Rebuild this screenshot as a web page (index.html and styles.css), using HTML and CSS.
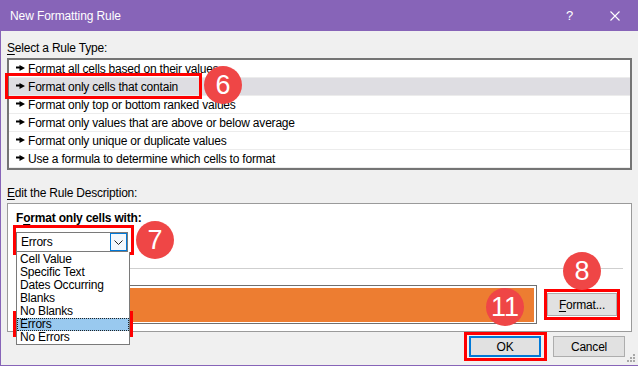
FILE: index.html
```html
<!DOCTYPE html>
<html lang="en">
<head>
  <meta charset="UTF-8">
  <meta name="viewport" content="width=device-width, initial-scale=1.0">
  <title>New Formatting Rule</title>
  <link rel="stylesheet" href="styles.css">
</head>
<body>
  <div class="dialog">
    <header class="titlebar">
      <span class="title">New Formatting Rule</span>
      <span class="help">?</span>
      <svg class="close" viewBox="0 0 10 10" width="10" height="10">
        <path d="M0.5 0.5 L9.5 9.5 M9.5 0.5 L0.5 9.5" stroke="#fff" stroke-width="1.1" fill="none"/>
      </svg>
    </header>

    <main class="content">
      <p class="label"><u>S</u>elect a Rule Type:</p>
      <ul class="rule-list">
        <li class="rule"><svg class="arrow" viewBox="0 0 9 6" width="9" height="6"><path d="M0 1.5h4v2H0z M3.5 0 L9 3 L3.5 6z"/></svg>Format all cells based on their values</li>
        <li class="rule rule--selected"><svg class="arrow" viewBox="0 0 9 6" width="9" height="6"><path d="M0 1.5h4v2H0z M3.5 0 L9 3 L3.5 6z"/></svg>Format only cells that contain</li>
        <li class="rule"><svg class="arrow" viewBox="0 0 9 6" width="9" height="6"><path d="M0 1.5h4v2H0z M3.5 0 L9 3 L3.5 6z"/></svg>Format only top or bottom ranked values</li>
        <li class="rule"><svg class="arrow" viewBox="0 0 9 6" width="9" height="6"><path d="M0 1.5h4v2H0z M3.5 0 L9 3 L3.5 6z"/></svg>Format only values that are above or below average</li>
        <li class="rule"><svg class="arrow" viewBox="0 0 9 6" width="9" height="6"><path d="M0 1.5h4v2H0z M3.5 0 L9 3 L3.5 6z"/></svg>Format only unique or duplicate values</li>
        <li class="rule"><svg class="arrow" viewBox="0 0 9 6" width="9" height="6"><path d="M0 1.5h4v2H0z M3.5 0 L9 3 L3.5 6z"/></svg>Use a formula to determine which cells to format</li>
      </ul>

      <p class="label label--desc"><u>E</u>dit the Rule Description:</p>
      <section class="desc">
        <p class="desc-title">F<u>o</u>rmat only cells with:</p>
        <div class="combo">
          <span class="combo-value">Errors</span>
          <span class="combo-btn">
            <svg viewBox="0 0 9 5" width="9" height="5"><path d="M0.5 0.5 L4.5 4.5 L8.5 0.5" stroke="#222" stroke-width="1" fill="none"/></svg>
          </span>
          <ul class="combo-list">
            <li>Cell Value</li>
            <li>Specific Text</li>
            <li>Dates Occurring</li>
            <li>Blanks</li>
            <li>No Blanks</li>
            <li class="combo-item--selected">Errors</li>
            <li>No Errors</li>
          </ul>
        </div>
        <div class="separator"></div>
        <div class="preview-row">
          <div class="preview"><div class="preview-fill"></div></div>
          <button class="btn btn--format"><u>F</u>ormat...</button>
        </div>
      </section>

      <div class="actions">
        <button class="btn btn--default">OK</button>
        <button class="btn">Cancel</button>
      </div>
    </main>

    <!-- annotation marks -->
    <div class="mark mark--rule"></div>
    <div class="mark mark--combo"></div>
    <div class="mark mark--errors"></div>
    <div class="mark mark--format"></div>
    <div class="mark mark--ok"></div>

    <span class="badge badge--6">6</span>
    <span class="badge badge--7">7</span>
    <span class="badge badge--8">8</span>
    <span class="badge badge--11">11</span>

    <svg class="grip" viewBox="0 0 9 9" width="9" height="9">
      <g fill="#a8a8a8">
        <rect x="6" y="0" width="2" height="2"/>
        <rect x="3" y="3" width="2" height="2"/><rect x="6" y="3" width="2" height="2"/>
        <rect x="0" y="6" width="2" height="2"/><rect x="3" y="6" width="2" height="2"/><rect x="6" y="6" width="2" height="2"/>
      </g>
    </svg>
  </div>
</body>
</html>
```

FILE: styles.css
```css
:root {
  --title-color: #8764b8;
  --page-color: #f0f0f0;
  --mark-color: #ff0000;
  --badge-color: #ef4646;
}
* {
  margin: 0;
  padding: 0;
  box-sizing: border-box;
}
body {
  width: 638px;
  height: 366px;
  overflow: hidden;
  font-family: "Liberation Sans", Arial, sans-serif;
  font-size: 12px;
  line-height: 14px;
  letter-spacing: -0.2px;
  color: #000;
}
ul {
  list-style: none;
}
u {
  text-decoration-thickness: 1px;
  text-underline-offset: 2px;
}

.dialog {
  position: relative;
  height: 366px;
  background-color: var(--page-color);
  /* window frame: left and bottom edge */
  box-shadow: inset 1px 0 var(--title-color), inset 0 -1px var(--title-color);
}

/* Title bar */

.titlebar {
  display: flex;
  align-items: center;
  height: 31px;
  padding-left: 10px;
  background-color: var(--title-color);
  color: #fff;
}
.title {
  letter-spacing: -0.1px;
}
.help {
  margin-left: auto;
  font-size: 13px;
}
.close {
  margin: 0 18px 0 37px;
}

/* Content */

.content {
  padding: 0 6px 0 7px;
}
.label {
  margin-top: 10px;
}
.label--desc {
  margin-top: 16px;
}

.rule-list {
  margin-top: 3px;
  border: 2px solid #747474;
  background-color: #fff;
}
.rule {
  display: flex;
  align-items: center;
  gap: 3px;
  height: 18px;
  padding-left: 7px;
  border-bottom: 1px solid #ececec;
}
.rule--selected {
  background-color: #dedde2;
}
.arrow {
  flex: none;
  margin-top: -1px;
}

/* Rule description */

.desc {
  margin-top: 3px;
  border: 1px solid #9a9a9a;
  background-color: #fff;
  padding: 7px 14px 7px 8px;
}
.desc-title {
  font-weight: bold;
}
.combo {
  position: relative;
  display: flex;
  align-items: center;
  width: 112px;
  height: 20px;
  margin-top: 7px;
  border: 1px solid #7a7a7a;
}
.combo-value {
  flex: 1;
  padding-left: 4px;
}
.combo-btn {
  display: flex;
  align-items: center;
  justify-content: center;
  width: 17px;
  height: 18px;
  border: 1px solid #0078d7;
  background-color: #f3f8fd;
}
.combo-list {
  position: absolute;
  z-index: 2;
  top: 19px;
  left: -1px;
  width: 114px;
  padding-top: 1px;
  border: 1px solid #7a7a7a;
  border-top: 0;
  background-color: #fff;
}
.combo-list li {
  height: 13px;
  line-height: 13px;
  padding-left: 3px;
}
.combo-item--selected {
  background-color: #99c9ef;
  outline: 1px dotted #222;
  outline-offset: -1px;
}

.separator {
  height: 1px;
  margin: 16px -6px 0 0;
  background-color: #cfcfcf;
}
.preview-row {
  display: flex;
  align-items: center;
  gap: 10px;
  margin-top: 16px;
}
.preview {
  flex: 1;
  margin-left: 70px;
  border: 1px solid #707070;
  padding: 2px 2px 1px;
}
.preview-fill {
  height: 34px;
  background-color: #ed7d31;
}

/* Buttons */

.btn {
  width: 72px;
  height: 21px;
  border: 1px solid #adadad;
  background-color: #e1e1e1;
  font: inherit;
  letter-spacing: inherit;
  color: #000;
}
.btn--format {
  width: 70px;
  height: 23px;
}
.btn--default {
  border: 2px solid #0078d7;
}
.actions {
  display: flex;
  justify-content: flex-end;
  gap: 12px;
  margin-top: 4px;
  padding-right: 7px;
}

/* Annotations drawn over the dialog */

.mark {
  position: absolute;
  border: 3px solid var(--mark-color);
}
.mark--rule   { left: 5px;   top: 73px;  width: 197px; height: 26px; }
.mark--combo  { left: 13px;  top: 225px; width: 121px; height: 30px; }
.mark--errors { left: 13px;  top: 311px; width: 120px; height: 26px; }
.mark--format { left: 544px; top: 289px; width: 76px;  height: 31px; }
.mark--ok     { left: 464px; top: 332px; width: 83px;  height: 29px; }

.badge {
  position: absolute;
  z-index: 3;
  display: flex;
  align-items: center;
  justify-content: center;
  width: 38px;
  height: 38px;
  border-radius: 50%;
  background-color: var(--badge-color);
  color: #fff;
  font-size: 27px;
  letter-spacing: 0;
}
.badge--6  { left: 204px; top: 66px; }
.badge--7  { left: 136px; top: 221px; }
.badge--8  { left: 563px; top: 252px; }
.badge--11 { left: 486px; top: 288px; }

.grip {
  position: absolute;
  right: 2px;
  bottom: 3px;
}
```
